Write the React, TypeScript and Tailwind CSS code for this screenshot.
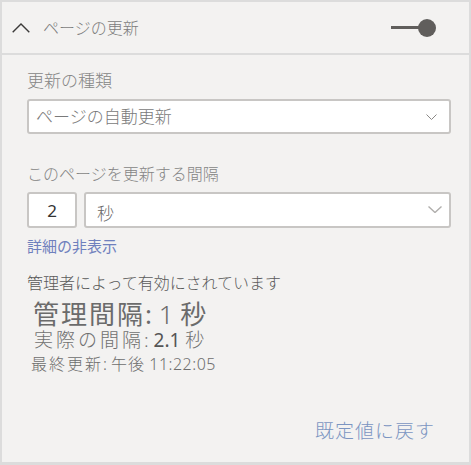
import React from "react";

const font = { fontFamily: "'Noto Sans', 'Noto Sans CJK JP', sans-serif" };

function ChevronDown({ className, w, h, stroke, sw }: { className?: string; w: number; h: number; stroke: string; sw: number }) {
  return (
    <svg className={className} width={w} height={h} viewBox={`0 0 ${w} ${h}`} fill="none">
      <polyline points={`0.5,0.5 ${w / 2},${h - 0.5} ${w - 0.5},0.5`} stroke={stroke} strokeWidth={sw} />
    </svg>
  );
}

export default function App() {
  return (
    <div
      style={font}
      className="w-[471px] h-[465px] bg-[#f3f2f1] border-t-2 border-l-2 border-r-2 border-b-[3px] border-[#dcdcdc] flex flex-col"
    >
      {/* Header */}
      <div className="h-[51px] flex items-center border-b-2 border-[#dcdcdc] box-content">
        <svg className="ml-[10px] mt-[1px]" width="18" height="10" viewBox="0 0 18 10" fill="none">
          <polyline points="0.7,9.3 9,1 17.3,9.3" stroke="#3b3a39" strokeWidth="1.4" />
        </svg>
        <span className="ml-[13px] text-[16px] leading-[24px] text-[#7d7d7d] font-light">ページの更新</span>
        <div className="ml-auto mr-[33px] flex items-center">
          <div className="w-[29px] h-[3px] bg-[#605e5c]" />
          <div className="w-[18px] h-[18px] rounded-full bg-[#605e5c] -ml-[2px]" />
        </div>
      </div>

      {/* Body */}
      <div className="flex flex-col pl-[25px] pr-[18px]">
        <div className="mt-[14px] h-[24px] leading-[24px] text-[17px] text-[#858585] font-light">更新の種類</div>
        <div className="mt-[6px] h-[35px] bg-white border-2 border-[#c8c6c4] rounded-[3px] flex items-center">
          <span className="ml-[7px] text-[17px] leading-[24px] text-[#7a7a7a] font-light">ページの自動更新</span>
          <ChevronDown className="ml-auto mr-[12px] mt-[1px]" w={11} h={6} stroke="#8a8886" sw={1} />
        </div>

        <div className="mt-[28px] h-[25px] leading-[25px] text-[16px] text-[#858585] font-light">このページを更新する間隔</div>
        <div className="mt-[5px] h-[36px] flex gap-[7px]">
          <div className="w-[50px] h-full bg-white border-2 border-[#c8c6c4] rounded-[3px] flex items-center justify-center">
            <span className="text-[17px] text-[#333333] leading-none">2</span>
          </div>
          <div className="flex-1 h-full bg-white border-2 border-[#c8c6c4] rounded-[3px] flex items-center">
            <span className="ml-[11px] mt-[8px] text-[17px] leading-[24px] text-[#666666] font-light">秒</span>
            <ChevronDown className="ml-auto mr-[7px] -mt-[2px]" w={14} h={7} stroke="#b0aeac" sw={1.4} />
          </div>
        </div>

        <div className="mt-[6px] h-[24px] leading-[24px] text-[15px] text-[#6f80bd]">詳細の非表示</div>

        <div className="mt-[13px] h-[24px] leading-[24px] text-[16px] text-[#5a5a5a] font-light">管理者によって有効にされています</div>
        <div className="mt-[5px] h-[28px] leading-[28px] text-[26px] text-[#6b6b6b] ml-[6px]">
          <span className="tracking-[2px]">管理間隔</span>: <span className="font-light">1</span> 秒
        </div>
        <div className="h-[24px] leading-[24px] text-[19px] text-[#707070] font-light ml-[7px]">
          <span className="tracking-[3px]">実際の間隔</span>: <span className="font-normal text-[#555555]">2.1</span> 秒
        </div>
        <div className="h-[24px] leading-[24px] text-[16px] text-[#6e6e6e] font-light ml-[4px]">
          <span className="tracking-[2px]">最終更新</span>: <span className="tracking-[1px]">午後</span> <span className="text-[16px] tracking-[0.5px]">11:22:05</span>
        </div>

        <div className="mt-[43px] h-[24px] leading-[24px] text-[19px] text-[#7b95c1] font-light self-end mr-[16px] tracking-[1px]">
          既定値に戻す
        </div>
      </div>
    </div>
  );
}
